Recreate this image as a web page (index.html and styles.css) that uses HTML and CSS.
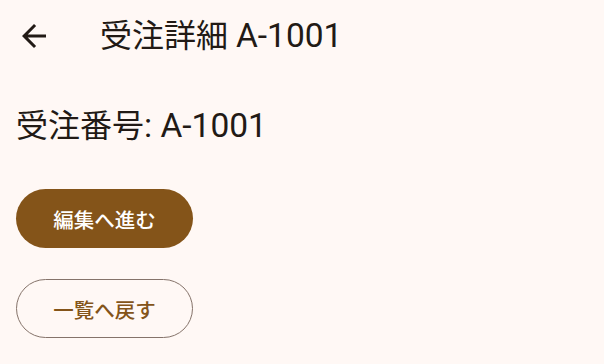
FILE: index.html
```html
<!DOCTYPE html>
<html lang="ja">
<head>
    <meta charset="UTF-8">
    <meta name="viewport" content="width=device-width, initial-scale=1.0">
    <title>受注詳細 A-1001</title>
    <link rel="stylesheet" href="styles.css">
</head>
<body>
    <div class="topbar">
        <button class="back" aria-label="戻る">
            <svg width="36" height="36" viewBox="0 0 24 24"><path d="M20 11H7.83l5.59-5.59L12 4l-8 8 8 8 1.41-1.41L7.83 13H20v-2z" fill="currentColor"/></svg>
        </button>
        <h1 class="title">受注詳細 <span class="latin">A-1001</span></h1>
    </div>
    <div class="content">
        <p class="order">受注番号<span class="latin">: A-1001</span></p>
        <button class="btn filled">編集へ進む</button>
        <button class="btn outlined">一覧へ戻す</button>
    </div>
</body>
</html>
```

FILE: styles.css
```css
body {
    margin: 0;
    background: #fff8f5;
    font-family: Roboto, "Noto Sans CJK JP", sans-serif;
    color: #221a15;
}
.topbar {
    height: 72px;
    display: flex;
    align-items: center;
}
.back {
    width: 36px;
    height: 36px;
    margin-left: 16px;
    padding: 0;
    border: none;
    background: none;
    color: #221a15;
    display: flex;
}
.title {
    margin: 0 0 0 48px;
    font-size: 32px;
    font-weight: 400;
    line-height: 40px;
}
.latin {
    font-size: 33.5px;
}
.content {
    padding: 0 16px;
    display: flex;
    flex-direction: column;
    align-items: flex-start;
}
.order {
    margin: 34px 0 43px;
    font-size: 32px;
    line-height: 40px;
}
.btn {
    height: 59px;
    width: 177px;
    border-radius: 30px;
    font-family: Roboto, "Noto Sans CJK JP", sans-serif;
    font-size: 20.5px;
    font-weight: 500;
    padding: 0;
}
.filled {
    background: #845419;
    color: #ffffff;
    border: none;
}
.outlined {
    margin-top: 31px;
    background: transparent;
    color: #845419;
    border: 1.5px solid #85736a;
}
```
